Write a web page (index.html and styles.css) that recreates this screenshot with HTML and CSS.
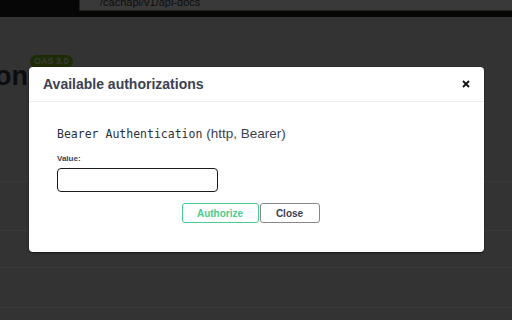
FILE: index.html
```html
<!DOCTYPE html>
<html lang="en">
<head>
    <meta charset="UTF-8">
    <meta name="viewport" content="width=device-width, initial-scale=1.0">
    <title>Swagger UI</title>
    <link rel="stylesheet" href="styles.css">
</head>
<body>
    <div class="topbar">
        <div class="url-input">/cachapi/v1/api-docs</div>
    </div>

    <div class="info">
        <h2 class="title">on</h2>
        <span class="badge">OAS 3.0</span>
    </div>

    <div class="rows">
        <div class="row row-first"></div>
        <div class="row row-tall"></div>
        <div class="row row-short"></div>
        <div class="row"></div>
    </div>

    <div class="modal">
        <div class="modal-header">
            <h3>Available authorizations</h3>
            <button class="close-modal" type="button">
                <svg width="8" height="8" viewBox="0 0 8 8">
                    <path d="M1 1 L7 7 M7 1 L1 7" stroke="#111" stroke-width="1.8" fill="none"/>
                </svg>
            </button>
        </div>
        <div class="modal-body">
            <h4><code>Bearer Authentication</code> (http, Bearer)</h4>
            <label>Value:</label>
            <input type="text" class="value-input">
            <div class="auth-btn-wrapper">
                <button type="button" class="btn authorize">Authorize</button>
                <button type="button" class="btn btn-close">Close</button>
            </div>
        </div>
    </div>
</body>
</html>
```

FILE: styles.css
```css
body {
    margin: 0;
    background-color: #333333;
    font-family: "Liberation Sans", Arial, sans-serif;
    overflow: hidden;
    height: 320px;
}

.topbar {
    background-color: #060606;
    height: 17px;
    padding-left: 79px;
}

.url-input {
    height: 10px;
    background-color: #393939;
    border-bottom: 1px solid #1c2418;
    border-left: 1px solid #1c2418;
    color: #0e0e0e;
    font-size: 11px;
    line-height: 4px;
    padding-left: 20px;
    overflow: hidden;
}

.info {
    display: flex;
    align-items: flex-start;
    height: 87px;
    padding-top: 37px;
    box-sizing: border-box;
}

.title {
    margin: 0 0 0 -5px;
    font-size: 27px;
    font-weight: bold;
    color: #0c0d10;
    line-height: 44px;
}

.badge {
    margin: 1px 0 0 2px;
    background-color: #1e2c05;
    color: #3a3a3a;
    font-size: 9px;
    font-weight: bold;
    border-radius: 57px;
    padding: 1px 4px;
    line-height: 11px;
}

.row {
    height: 39px;
    border-bottom: 1px solid #393939;
}

.row-first {
    height: 77px;
}

.row-tall {
    height: 48px;
}

.row-short {
    height: 36px;
}

.modal {
    position: absolute;
    left: 29px;
    top: 67px;
    width: 455px;
    height: 185px;
    background: white;
    border-radius: 4px;
    box-shadow: 0 1px 2px rgba(0, 0, 0, 0.6);
}

.modal-header {
    display: flex;
    align-items: center;
    justify-content: space-between;
    height: 34px;
    padding: 0 14px 0 14px;
    border-bottom: 1px solid #ebebeb;
}

.modal-header h3 {
    margin: 0;
    font-size: 14px;
    color: #3b4151;
    font-weight: bold;
}

.close-modal {
    border: none;
    background: none;
    padding: 0;
    display: flex;
}

.modal-body {
    padding: 24px 28px 20px;
}

.modal-body h4 {
    margin: 0 0 13px 0;
    font-size: 13.5px;
    font-weight: normal;
    color: #3b4151;
}

.modal-body code {
    font-family: "DejaVu Sans Mono", monospace;
    font-size: 11.5px;
    color: #2b2f3a;
}

.modal-body label {
    display: block;
    font-size: 8px;
    font-weight: bold;
    color: #3b4151;
    margin-bottom: 5px;
}

.value-input {
    display: block;
    width: 161px;
    height: 24px;
    box-sizing: border-box;
    border: 1px solid #1b1b1b;
    border-radius: 4px;
    margin: 0;
}

.auth-btn-wrapper {
    display: flex;
    justify-content: center;
    margin-top: 11px;
    padding-right: 11px;
}

.btn {
    height: 20px;
    background: transparent;
    border-radius: 3px;
    font-family: "Liberation Sans", Arial, sans-serif;
    font-size: 10px;
    font-weight: bold;
    padding: 0;
    margin-right: 1px;
}

.authorize {
    width: 77px;
    border: 1px solid #49cc90;
    color: #49cc90;
}

.btn-close {
    width: 60px;
    border: 1px solid #888888;
    color: #3b4151;
}
```
